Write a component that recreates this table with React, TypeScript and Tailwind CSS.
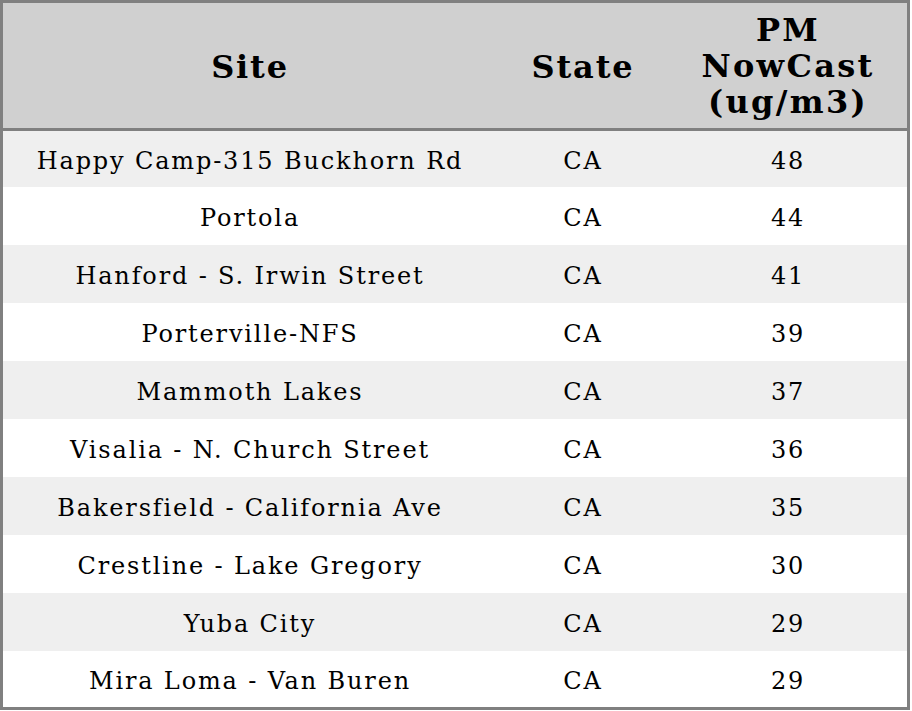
const rows: [string, string, string][] = [
  ['Happy Camp-315 Buckhorn Rd', 'CA', '48'],
  ['Portola', 'CA', '44'],
  ['Hanford - S. Irwin Street', 'CA', '41'],
  ['Porterville-NFS', 'CA', '39'],
  ['Mammoth Lakes', 'CA', '37'],
  ['Visalia - N. Church Street', 'CA', '36'],
  ['Bakersfield - California Ave', 'CA', '35'],
  ['Crestline - Lake Gregory', 'CA', '30'],
  ['Yuba City', 'CA', '29'],
  ['Mira Loma - Van Buren', 'CA', '29'],
];

export default function App() {
  return (
    <div className="w-[912px] h-[711px] bg-white font-['DejaVu_Serif',serif] text-black">
      <div className="w-[910px] border-[3px] border-[#808080]">
        {/* header */}
        <div className="grid grid-cols-[494px_172px_238px] h-[128px] bg-[#d0d0d0] border-b-[3px] border-[#808080] text-[32px] leading-[36px] font-bold tracking-[1.8px] text-center">
          <div className="flex items-center justify-center pt-[2px]">Site</div>
          <div className="flex items-center justify-center pt-[2px]">State</div>
          <div className="flex items-center justify-center tracking-[2.3px]">
            PM
            <br />
            NowCast
            <br />
            (ug/m3)
          </div>
        </div>
        {rows.map((r, i) => (
          <div
            key={i}
            className={`grid grid-cols-[494px_172px_238px] items-center text-center text-[24px] tracking-[1.85px] pt-[4px] ${
              i === 0 || i === rows.length - 1 ? 'h-[56px]' : 'h-[58px]'
            } ${i % 2 === 0 ? 'bg-[#efefef]' : 'bg-white'}`}
          >
            <div>{r[0]}</div>
            <div>{r[1]}</div>
            <div>{r[2]}</div>
          </div>
        ))}
      </div>
    </div>
  );
}
